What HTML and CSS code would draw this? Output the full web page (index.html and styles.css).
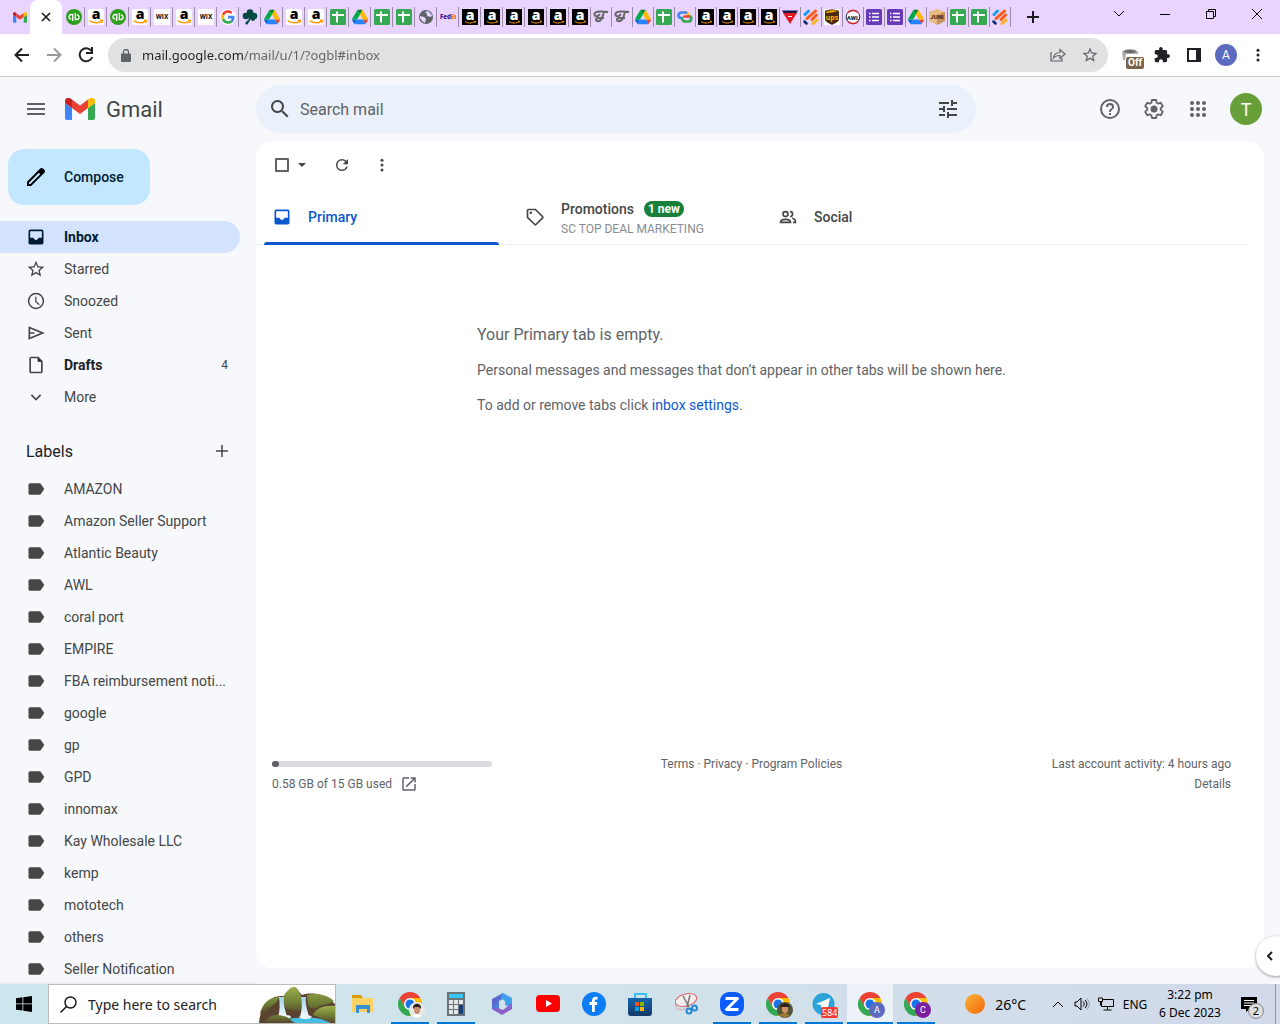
FILE: index.html
```html
<!DOCTYPE html>
<html lang="en">
<head>
    <meta charset="UTF-8">
    <meta name="viewport" content="width=device-width, initial-scale=1.0">
    <title>Inbox - Gmail</title>
    <link rel="stylesheet" href="styles.css">
</head>
<body>
    <!-- Gradients -->
    <svg class="gradients" aria-hidden="true">
        <defs>
            <linearGradient id="sun" x1="0" y1="0" x2="1" y2="1"><stop offset="0" stop-color="#f9b233"/><stop offset="1" stop-color="#f2690d"/></linearGradient>
            <linearGradient id="hill" x1="0" y1="0" x2="0" y2="1"><stop offset="0" stop-color="#9caf4a"/><stop offset=".6" stop-color="#6c7c35"/><stop offset="1" stop-color="#58442c"/></linearGradient>
            <linearGradient id="fall" x1="0" y1="0" x2="0" y2="1"><stop offset="0" stop-color="#9fd3ea"/><stop offset="1" stop-color="#f2fafd"/></linearGradient>
            <linearGradient id="office" x1="0" y1="0" x2="1" y2="1"><stop offset="0" stop-color="#6a4fc4"/><stop offset="1" stop-color="#3aa0ee"/></linearGradient>
            <linearGradient id="store" x1="0" y1="0" x2="0" y2="1"><stop offset="0" stop-color="#1266ad"/><stop offset="1" stop-color="#173a68"/></linearGradient>
        </defs>
    </svg>

    <!-- Shared icons -->
    <svg class="sprite" aria-hidden="true">
        <symbol id="gmail" viewBox="0 0 30 22">
            <path fill="#4285f4" d="M0 5l7 5v12H2a2 2 0 0 1-2-2z"/>
            <path fill="#34a853" d="M30 5l-7 5v12h5a2 2 0 0 0 2-2z"/>
            <path fill="#ea4335" d="M7 1.500l8 6 8-6V10l-8 6-8-6z"/>
            <path fill="#c5221f" d="M0 3C0 0 3-.9 5.400.400L7 1.500V10L0 5z"/>
            <path fill="#fbbc04" d="M30 3c0-3-3-3.900-5.400-2.600L23 1.500V10l7-5z"/>
        </symbol>
        <symbol id="qb" viewBox="0 0 16 16">
            <circle cx="8" cy="8" r="8" fill="#2ca01c"/>
            <path fill="none" stroke="#fff" stroke-width="1.300" d="M6.700 12V5.500H5.300a2.300 2.300 0 0 0 0 4.700M9.300 4v6.500h1.400a2.300 2.300 0 0 0 0-4.700"/>
        </symbol>
        <symbol id="amazon" viewBox="0 0 16 16">
            <rect width="16" height="16" rx="2" fill="#fff"/>
            <text x="8" y="10" text-anchor="middle" font-family="Open Sans, sans-serif" font-weight="800" font-size="14" fill="#000">a</text>
            <path fill="none" stroke="#ff9900" stroke-width="1.500" d="M1.500 11.500c4 3 9 3 12 .600M12 11.300l2.400.200-.600 2.200"/>
        </symbol>
        <symbol id="amazon-dark" viewBox="0 0 16 16">
            <rect width="16" height="16" fill="#000"/>
            <text x="8" y="11" text-anchor="middle" font-family="Open Sans, sans-serif" font-weight="800" font-size="14" fill="#fff">a</text>
            <path fill="none" stroke="#ff9900" stroke-width="1" d="M3 12.500c3 2 7 2 10 0M12 12.200l1.500.100-.500 1.500"/>
        </symbol>
        <symbol id="wix" viewBox="0 0 16 16">
            <rect width="16" height="16" fill="#fff"/>
            <text x="8" y="10" text-anchor="middle" font-family="Roboto, sans-serif" font-weight="700" font-size="7" fill="#111">WIX</text>
        </symbol>
        <symbol id="google" viewBox="-4 -4 56 56">
            <circle cx="24" cy="24" r="28" fill="#fff"/>
            <path fill="#ea4335" d="M24 9.500c3.540 0 6.710 1.220 9.210 3.600l6.850-6.850C35.900 2.380 30.470 0 24 0 14.620 0 6.510 5.380 2.560 13.220l7.980 6.190C12.430 13.720 17.740 9.500 24 9.500z"/>
            <path fill="#4285f4" d="M46.980 24.550c0-1.570-.150-3.090-.380-4.550H24v9.020h12.940c-.580 2.960-2.260 5.480-4.780 7.180l7.730 6c4.510-4.180 7.090-10.360 7.090-17.650z"/>
            <path fill="#fbbc05" d="M10.530 28.590c-.480-1.450-.760-2.990-.760-4.590s.270-3.140.760-4.590l-7.980-6.190C.920 16.460 0 20.120 0 24c0 3.880.920 7.540 2.560 10.780l7.970-6.190z"/>
            <path fill="#34a853" d="M24 48c6.480 0 11.930-2.130 15.890-5.810l-7.730-6c-2.150 1.450-4.920 2.300-8.160 2.300-6.260 0-11.570-4.220-13.470-9.910l-7.980 6.190C6.510 42.620 14.620 48 24 48z"/>
        </symbol>
        <symbol id="clover" viewBox="0 0 16 16">
            <g fill="#044a42"><circle cx="8" cy="3.500" r="3.300"/><circle cx="4" cy="7" r="3.300"/><circle cx="12" cy="7" r="3.300"/><path d="M5 5h6l-2 5-4 6-2-2 4-4z"/><circle cx="11" cy="10" r="2"/></g>
        </symbol>
        <symbol id="drive" viewBox="0 -4 87.300 86">
            <path fill="#0066da" d="M6.600 66.850l3.850 6.650c.8 1.400 1.950 2.500 3.300 3.300L27.500 53H0c0 1.550.4 3.100 1.200 4.500z"/>
            <path fill="#00ac47" d="M43.650 25L29.900 1.200c-1.350.8-2.500 1.900-3.300 3.300L1.200 48.500A9 9 0 0 0 0 53h27.500z"/>
            <path fill="#ea4335" d="M73.550 76.800c1.350-.8 2.500-1.900 3.300-3.300L86.100 57.500c.8-1.400 1.200-2.950 1.200-4.500H59.800l5.850 11.500z"/>
            <path fill="#00832d" d="M43.650 25L57.400 1.200C56.050.4 54.500 0 52.900 0H34.400c-1.600 0-3.150.45-4.500 1.200z"/>
            <path fill="#2684fc" d="M59.800 53H27.500L13.750 76.800c1.350.8 2.900 1.200 4.500 1.200h50.800c1.600 0 3.150-.45 4.500-1.200z"/>
            <path fill="#ffba00" d="M73.400 26.500L60.700 4.500c-.8-1.400-1.950-2.500-3.300-3.300L43.650 25 59.800 53h27.450c0-1.550-.4-3.100-1.200-4.500z"/>
        </symbol>
        <symbol id="sheets" viewBox="0 0 16 16">
            <rect width="16" height="16" rx="1.500" fill="#34a853"/>
            <path stroke="#fff" stroke-width="2" d="M2 6h12M7 2.500v11"/>
        </symbol>
        <symbol id="globe" viewBox="0 0 16 16">
            <circle cx="8" cy="8" r="7" fill="#5f6368"/>
            <path fill="#e9d3ff" d="M2 7l4 1 2 2-1 4-3-2-2-3zM7 3l3-1 4 4-1 2-4-1V5z"/>
        </symbol>
        <symbol id="fedex" viewBox="0 0 16 16">
            <text x="0" y="10" font-family="Open Sans, sans-serif" font-weight="800" font-size="6" fill="#4d148c">Fed<tspan fill="#ff6200">Ex</tspan></text>
        </symbol>
        <symbol id="tee" viewBox="0 0 16 16">
            <path fill="none" stroke="#666" stroke-width="2" d="M15 3C9 2 2 2 1.500 5S5 8 7 5M11 3C9 8 10 11 6 12s-4-3 0-3h5"/>
        </symbol>
        <symbol id="cloud" viewBox="0 0 16 16">
            <g fill="none" stroke-width="2.600" stroke-linecap="round">
                <path stroke="#fbbc04" d="M8 3.500c2 0 3 1 3.500 2.500"/>
                <path stroke="#4285f4" d="M9 3.500H5C.5 3.500.5 9 4 9h1"/>
                <path stroke="#34a853" d="M5 9c0 3 2 3.500 4 3.500h2c4 0 4-4 2-5"/>
                <path stroke="#ea4335" d="M7.500 7.500H12"/>
            </g>
        </symbol>
        <symbol id="triangle" viewBox="0 0 16 16">
            <path fill="#e51b23" d="M1 4h14L8 15z"/>
            <path fill="#1b1b4b" d="M0 1.500h16L14.500 4h-13z"/>
            <path stroke="#fff" d="M6 7.500h4"/>
        </symbol>
        <symbol id="bolt" viewBox="0 0 16 16">
            <g fill="none" stroke-linecap="round" stroke-width="3">
                <path stroke="#199cf4" d="M2 5.500L5.500 2"/><path stroke="#ff5a13" d="M4 9.500l8.500-7.500M9 10.500L13.500 6"/><path stroke="#ffb52b" d="M10 14.500l4-3.500"/><path stroke="#0b2a66" stroke-width="2.500" d="M1.500 12.500l2 2"/>
            </g>
        </symbol>
        <symbol id="ups" viewBox="0 0 16 16">
            <rect width="16" height="16" fill="#fff"/>
            <path fill="#4b2a10" d="M1 2c4-2 10-2 14 0v8c0 3-4 4-7 6-3-2-7-3-7-6z"/>
            <path fill="#e9a400" d="M2 4c5 0 8-1 12-2-3-1-9-1-12 1z"/>
            <text x="8" y="11" text-anchor="middle" font-family="Open Sans, sans-serif" font-weight="700" font-size="7" fill="#ffb500">ups</text>
        </symbol>
        <symbol id="awl" viewBox="0 0 16 16">
            <circle cx="8" cy="8" r="6.800" fill="#fff" stroke="#29324b"/>
            <path fill="none" stroke="#d92231" stroke-width="1.500" d="M3 3.500a7 7 0 0 1 10 0M3 12.500a7 7 0 0 0 10 0"/>
            <text x="8" y="10.500" text-anchor="middle" font-family="Roboto, sans-serif" font-weight="900" font-size="6" fill="#29324b">AWL</text>
        </symbol>
        <symbol id="forms" viewBox="0 0 16 16">
            <rect width="16" height="16" rx="1.500" fill="#673ab7"/>
            <path stroke="#fff" stroke-width="1.600" d="M3 4.500h1.600M6 4.500h7M3 8h1.600M6 8h7M3 11.500h1.600M6 11.500h7"/>
        </symbol>
        <symbol id="juni" viewBox="0 0 16 16">
            <path fill="#e5bb83" d="M8 0l8 3v9l-8 4-8-4V3z"/><path fill="#c6945b" d="M8 6l8-3v9l-8 4z"/>
            <text x="8" y="10" text-anchor="middle" font-family="Roboto, sans-serif" font-weight="900" font-size="6" fill="#3b352f">JUNI</text>
        </symbol>
        <symbol id="chrome" viewBox="0 0 48 48">
            <path fill="#fbbc04" d="M24 24V12h20.800A24 24 0 0 1 24 48z"/>
            <path fill="#34a853" d="M3.200 12l10.400 18L24 36l10.400-6L24 48A24 24 0 0 1 3.200 12z"/>
            <path fill="#ea4335" d="M3.200 12a24 24 0 0 1 41.600 0H24v12l-10.400 6z"/>
            <circle cx="24" cy="24" r="12" fill="#fff"/><circle cx="24" cy="24" r="9" fill="#1a73e8"/>
        </symbol>
        <symbol id="star" viewBox="0 0 24 24"><path d="M22 9.240l-7.190-.620L12 2 9.190 8.630 2 9.240l5.460 4.730L5.820 21 12 17.270 18.180 21l-1.630-7.030L22 9.240zM12 15.400l-3.760 2.270 1-4.280-3.320-2.880 4.380-.380L12 6.100l1.710 4.040 4.380.380-3.320 2.880 1 4.280L12 15.400z"/></symbol>
        <symbol id="inbox" viewBox="0 0 24 24"><path d="M19 3H5a2 2 0 0 0-2 2v14c0 1.100.9 2 2 2h14a2 2 0 0 0 2-2V5a2 2 0 0 0-2-2zm0 10h-4c-.500 1.700-1.500 2.500-3 2.500S9.500 14.700 9 13H5V5h14v8z"/></symbol>
        <symbol id="more" viewBox="0 0 24 24"><circle cx="12" cy="5.500" r="2"/><circle cx="12" cy="12" r="2"/><circle cx="12" cy="18.500" r="2"/></symbol>
        <symbol id="refresh" viewBox="0 0 24 24"><path d="M17.650 6.350A7.960 7.960 0 0 0 12 4a8 8 0 1 0 7.730 10h-2.080A6 6 0 1 1 12 6c1.660 0 3.140.690 4.220 1.780L13 11h7V4l-2.350 2.350z"/></symbol>
        <symbol id="search" viewBox="0 0 24 24"><path d="M15.500 14h-.790l-.280-.270A6.500 6.500 0 1 0 13.730 14.430l.270.280v.790l5 4.990L20.490 19l-4.990-5zm-6 0a4.500 4.500 0 1 1 0-9 4.500 4.500 0 0 1 0 9z"/></symbol>
        <symbol id="label" viewBox="0 0 24 24"><path d="M17.630 5.840C17.270 5.330 16.670 5 16 5L5 5.010C3.900 5.010 3 5.900 3 7v10c0 1.100.9 1.990 2 1.990L16 19c.670 0 1.270-.330 1.630-.840L22 12l-4.370-6.160z"/></symbol>
    </svg>

    <!-- Browser tabs -->
    <div class="tab-strip">
        <button class="pinned-tab" aria-label="Gmail"><svg width="14" height="11"><use href="#gmail"/></svg></button>
        <button class="active-tab" aria-label="Close tab"><svg width="10" height="10" viewBox="0 0 10 10"><path stroke="#1d1b20" stroke-width="1.600" d="M1 1l8 8M9 1L1 9"/></svg></button>
        <div class="tabs">
            <button class="tab"><svg><use href="#qb"/></svg></button>
            <button class="tab"><svg><use href="#amazon"/></svg></button>
            <button class="tab"><svg><use href="#qb"/></svg></button>
            <button class="tab"><svg><use href="#amazon"/></svg></button>
            <button class="tab"><svg><use href="#wix"/></svg></button>
            <button class="tab"><svg><use href="#amazon"/></svg></button>
            <button class="tab"><svg><use href="#wix"/></svg></button>
            <button class="tab"><svg><use href="#google"/></svg></button>
            <button class="tab"><svg><use href="#clover"/></svg></button>
            <button class="tab"><svg><use href="#drive"/></svg></button>
            <button class="tab"><svg><use href="#amazon"/></svg></button>
            <button class="tab"><svg><use href="#amazon"/></svg></button>
            <button class="tab"><svg><use href="#sheets"/></svg></button>
            <button class="tab"><svg><use href="#drive"/></svg></button>
            <button class="tab"><svg><use href="#sheets"/></svg></button>
            <button class="tab"><svg><use href="#sheets"/></svg></button>
            <button class="tab"><svg><use href="#globe"/></svg></button>
            <button class="tab"><svg><use href="#fedex"/></svg></button>
            <button class="tab"><svg><use href="#amazon-dark"/></svg></button>
            <button class="tab"><svg><use href="#amazon-dark"/></svg></button>
            <button class="tab"><svg><use href="#amazon-dark"/></svg></button>
            <button class="tab"><svg><use href="#amazon-dark"/></svg></button>
            <button class="tab"><svg><use href="#amazon-dark"/></svg></button>
            <button class="tab"><svg><use href="#amazon-dark"/></svg></button>
            <button class="tab narrow"><svg><use href="#tee"/></svg></button>
            <button class="tab narrow"><svg><use href="#tee"/></svg></button>
            <button class="tab narrow"><svg><use href="#drive"/></svg></button>
            <button class="tab narrow"><svg><use href="#sheets"/></svg></button>
            <button class="tab narrow"><svg><use href="#cloud"/></svg></button>
            <button class="tab narrow"><svg><use href="#amazon-dark"/></svg></button>
            <button class="tab narrow"><svg><use href="#amazon-dark"/></svg></button>
            <button class="tab narrow"><svg><use href="#amazon-dark"/></svg></button>
            <button class="tab narrow"><svg><use href="#amazon-dark"/></svg></button>
            <button class="tab narrow"><svg><use href="#triangle"/></svg></button>
            <button class="tab narrow"><svg><use href="#bolt"/></svg></button>
            <button class="tab narrow"><svg><use href="#ups"/></svg></button>
            <button class="tab narrow"><svg><use href="#awl"/></svg></button>
            <button class="tab narrow"><svg><use href="#forms"/></svg></button>
            <button class="tab narrow"><svg><use href="#forms"/></svg></button>
            <button class="tab narrow"><svg><use href="#drive"/></svg></button>
            <button class="tab narrow"><svg><use href="#juni"/></svg></button>
            <button class="tab narrow"><svg><use href="#sheets"/></svg></button>
            <button class="tab narrow"><svg><use href="#sheets"/></svg></button>
            <button class="tab narrow"><svg><use href="#bolt"/></svg></button>
        </div>
        <button class="new-tab" aria-label="New tab"><svg width="12" height="12" viewBox="0 0 12 12"><path stroke="#1d1b20" stroke-width="2" d="M6 0v12M0 6h12"/></svg></button>
        <div class="window-controls">
            <button aria-label="Search tabs"><svg width="12" height="12" viewBox="0 0 12 12"><path d="M1 3l5 5 5-5"/></svg></button>
            <button aria-label="Minimize"><svg width="12" height="12" viewBox="0 0 12 12"><path d="M1 6.500h10"/></svg></button>
            <button aria-label="Restore"><svg width="12" height="12" viewBox="0 0 12 12"><path d="M1.500 3.500h7v7h-7zM3.500 3.500v-2h7v7h-2"/></svg></button>
            <button aria-label="Close"><svg width="12" height="12" viewBox="0 0 12 12"><path d="M1 1l10 10M11 1L1 11"/></svg></button>
        </div>
    </div>

    <!-- Address bar -->
    <div class="toolbar">
        <button class="tool" aria-label="Back"><svg width="16" height="16" viewBox="0 0 16 16"><path fill="none" stroke="#202124" stroke-width="2" d="M15 8H2M8 1.500L1.500 8 8 14.500"/></svg></button>
        <button class="tool" aria-label="Forward"><svg width="16" height="16" viewBox="0 0 16 16"><path fill="none" stroke="#9a9b9d" stroke-width="2" d="M1 8h13M8 1.500L14.500 8 8 14.500"/></svg></button>
        <button class="tool" aria-label="Reload"><svg width="16" height="16" viewBox="0 0 16 16"><path fill="none" stroke="#202124" stroke-width="2" d="M13.500 4A6.500 6.500 0 1 0 14.300 10M14 0v6H8"/></svg></button>
        <div class="omnibox">
            <svg width="10" height="13" viewBox="0 0 10 13"><path fill="#5f6368" d="M1 4.500h8a1 1 0 0 1 1 1V12a1 1 0 0 1-1 1H1a1 1 0 0 1-1-1V5.500a1 1 0 0 1 1-1z"/><path fill="none" stroke="#5f6368" stroke-width="1.300" d="M2.500 5V3a2.500 2.500 0 0 1 5 0v2"/></svg>
            <input class="url" type="text" aria-label="Address" value="mail.google.com/mail/u/1/?ogbl#inbox">
            <button class="tool" aria-label="Share"><svg width="16" height="14" viewBox="0 0 16 14"><path fill="none" stroke="#5f6368" stroke-width="1.200" d="M1 4v9h11v-3M3.500 10c.5-4 3-5.500 6.500-5.500V1.500L15 6l-5 4.500v-3c-3 0-5 .500-6.500 2.500z"/></svg></button>
            <button class="tool" aria-label="Bookmark"><svg width="18" height="18" fill="#5f6368"><use href="#star"/></svg></button>
        </div>
        <button class="tool extension" aria-label="Extension">
            <svg width="16" height="12" viewBox="0 0 16 12"><path fill="#aaa" d="M0 3c2-4 14-4 16 0v2H4l-1 6H1z"/><ellipse cx="8" cy="2.500" rx="6" ry="1.500" fill="#666"/></svg>
            <span class="off">Off</span>
        </button>
        <button class="tool" aria-label="Extensions"><svg class="dark" width="16" height="16" viewBox="1 1 22 22"><path d="M20.500 11H19V7c0-1.100-.9-2-2-2h-4V3.500a2.500 2.500 0 0 0-5 0V5H4c-1.100 0-1.990.9-1.990 2v3.800H3.500a2.700 2.700 0 0 1 0 5.400H2V20c0 1.100.9 2 2 2h3.800v-1.500a2.700 2.700 0 0 1 5.400 0V22H17c1.100 0 2-.9 2-2v-4h1.500a2.500 2.500 0 0 0 0-5z"/></svg></button>
        <button class="tool" aria-label="Side panel"><svg width="14" height="14" viewBox="0 0 14 14"><path fill="#202124" d="M0 0h14v14H0zM2 2v10h7V2z" fill-rule="evenodd"/></svg></button>
        <button class="tool" aria-label="Profile"><span class="profile">A</span></button>
        <button class="tool" aria-label="Menu"><svg class="dark" width="18" height="18"><use href="#more"/></svg></button>
    </div>

    <div class="gmail">
        <header class="header">
            <div class="brand">
                <button class="icon-button" aria-label="Main menu"><svg width="18" height="12" viewBox="0 0 18 12"><path stroke="#5f6368" stroke-width="2" d="M0 1h18M0 6h18M0 11h18"/></svg></button>
                <a class="logo" href="#"><svg width="30" height="22"><use href="#gmail"/></svg><span>Gmail</span></a>
            </div>
            <form class="search">
                <button class="icon-button" type="button" aria-label="Search"><svg width="24" height="24"><use href="#search"/></svg></button>
                <input type="search" placeholder="Search mail" aria-label="Search mail">
                <button class="icon-button" type="button" aria-label="Search options"><svg width="24" height="24" viewBox="0 0 24 24"><path d="M3 17v2h6v-2H3zM3 5v2h10V5H3zm10 16v-2h8v-2h-8v-2h-2v6h2zM7 9v2H3v2h4v2h2V9H7zm14 4v-2H11v2h10zm-6-4h2V7h4V5h-4V3h-2v6z"/></svg></button>
            </form>
            <div class="header-actions">
                <button class="icon-button" aria-label="Support"><svg width="24" height="24" viewBox="0 0 24 24"><path d="M11 18h2v-2h-2v2zm1-16a10 10 0 1 0 0 20 10 10 0 0 0 0-20zm0 18a8 8 0 1 1 0-16 8 8 0 0 1 0 16zm0-14a4 4 0 0 0-4 4h2a2 2 0 1 1 4 0c0 2-3 1.750-3 5h2c0-2.250 3-2.500 3-5a4 4 0 0 0-4-4z"/></svg></button>
                <button class="icon-button" aria-label="Settings"><svg width="24" height="24" viewBox="0 0 24 24"><path fill="none" stroke="#5f6368" stroke-width="2" transform="translate(1.200 1.200) scale(.9)" d="M19.430 12.980c.040-.320.070-.640.070-.980 0-.340-.030-.660-.070-.980l2.110-1.650c.190-.150.240-.420.120-.640l-2-3.460c-.090-.160-.260-.250-.440-.250-.060 0-.120.010-.170.030l-2.490 1c-.520-.400-1.080-.730-1.690-.980l-.380-2.650C14.460 2.180 14.250 2 14 2h-4c-.250 0-.460.180-.490.420l-.380 2.650c-.610.250-1.170.590-1.690.980l-2.490-1c-.060-.020-.120-.030-.180-.030-.170 0-.340.090-.430.250l-2 3.460c-.130.220-.070.490.120.640l2.110 1.650c-.040.320-.070.650-.070.980 0 .330.030.660.070.980l-2.110 1.650c-.190.150-.240.420-.120.640l2 3.460c.090.160.260.250.440.250.060 0 .120-.010.170-.030l2.490-1c.520.400 1.080.730 1.690.980l.380 2.650c.030.240.240.420.490.420h4c.250 0 .460-.180.490-.420l.380-2.650c.610-.250 1.170-.590 1.690-.980l2.490 1c.060.020.120.030.180.030.170 0 .340-.090.430-.250l2-3.460c.120-.220.070-.490-.120-.640z"/><circle cx="12" cy="12" r="3.500"/></svg></button>
                <button class="icon-button" aria-label="Google apps"><svg width="24" height="24" viewBox="0 0 24 24"><g><circle cx="6" cy="6" r="2"/><circle cx="12" cy="6" r="2"/><circle cx="18" cy="6" r="2"/><circle cx="6" cy="12" r="2"/><circle cx="12" cy="12" r="2"/><circle cx="18" cy="12" r="2"/><circle cx="6" cy="18" r="2"/><circle cx="12" cy="18" r="2"/><circle cx="18" cy="18" r="2"/></g></svg></button>
                <button class="avatar" aria-label="Google Account">T</button>
            </div>
        </header>

        <div class="columns">
            <nav class="sidebar">
                <button class="compose"><svg width="24" height="24" viewBox="0 0 24 24"><path d="M20.410 4.940l-1.350-1.350c-.780-.780-2.050-.780-2.830 0L3 16.820V21h4.180L20.410 7.770c.79-.78.79-2.050 0-2.830zM6.410 19.060L5 19v-1.360l9.820-9.820 1.410 1.410z" fill="#000"/></svg>Compose</button>
                <ul class="nav-list">
                    <li><a class="nav-item selected" href="#"><svg><use href="#inbox"/></svg>Inbox</a></li>
                    <li><a class="nav-item" href="#"><svg><use href="#star"/></svg>Starred</a></li>
                    <li><a class="nav-item" href="#"><svg viewBox="0 0 24 24"><path d="M12 2.200a9.800 9.800 0 1 0 0 19.600 9.800 9.800 0 0 0 0-19.600zM12 20a8 8 0 1 1 0-16 8 8 0 0 1 0 16zm.500-13H11v6l4.500 4 1-1.200-4-3.400z"/></svg>Snoozed</a></li>
                    <li><a class="nav-item" href="#"><svg viewBox="0 0 24 24"><path fill="none" stroke="#444746" stroke-width="2" d="M4 5.500L20 12 4 18.500zM4 12h6"/></svg>Sent</a></li>
                    <li><a class="nav-item unread" href="#"><svg viewBox="0 0 24 24"><path fill="none" stroke="#444746" stroke-width="2" d="M6 3h8.500L19 7.500V20a1 1 0 0 1-1 1H6a1 1 0 0 1-1-1V4a1 1 0 0 1 1-1z"/><path d="M14 3v5h5z"/></svg>Drafts<span class="badge">4</span></a></li>
                    <li><a class="nav-item" href="#"><svg viewBox="0 0 24 24"><path fill="none" stroke="#444746" stroke-width="2" d="M6.500 9.500L12 15l5.500-5.500"/></svg>More</a></li>
                </ul>
                <div class="labels-heading">
                    <h2>Labels</h2>
                    <button class="add-label" aria-label="Create new label"><svg width="12" height="12" viewBox="0 0 12 12"><path stroke="#444746" stroke-width="1.500" d="M6 0v12M0 6h12"/></svg></button>
                </div>
                <ul class="nav-list">
                    <li><a class="nav-item" href="#"><svg><use href="#label"/></svg>AMAZON</a></li>
                    <li><a class="nav-item" href="#"><svg><use href="#label"/></svg>Amazon Seller Support</a></li>
                    <li><a class="nav-item" href="#"><svg><use href="#label"/></svg>Atlantic Beauty</a></li>
                    <li><a class="nav-item" href="#"><svg><use href="#label"/></svg>AWL</a></li>
                    <li><a class="nav-item" href="#"><svg><use href="#label"/></svg>coral port</a></li>
                    <li><a class="nav-item" href="#"><svg><use href="#label"/></svg>EMPIRE</a></li>
                    <li><a class="nav-item" href="#"><svg><use href="#label"/></svg>FBA reimbursement noti...</a></li>
                    <li><a class="nav-item" href="#"><svg><use href="#label"/></svg>google</a></li>
                    <li><a class="nav-item" href="#"><svg><use href="#label"/></svg>gp</a></li>
                    <li><a class="nav-item" href="#"><svg><use href="#label"/></svg>GPD</a></li>
                    <li><a class="nav-item" href="#"><svg><use href="#label"/></svg>innomax</a></li>
                    <li><a class="nav-item" href="#"><svg><use href="#label"/></svg>Kay Wholesale LLC</a></li>
                    <li><a class="nav-item" href="#"><svg><use href="#label"/></svg>kemp</a></li>
                    <li><a class="nav-item" href="#"><svg><use href="#label"/></svg>mototech</a></li>
                    <li><a class="nav-item" href="#"><svg><use href="#label"/></svg>others</a></li>
                    <li><a class="nav-item" href="#"><svg><use href="#label"/></svg>Seller Notification</a></li>
                </ul>
            </nav>

            <main class="mail">
                <div class="mail-toolbar">
                    <input class="select-all" type="checkbox" aria-label="Select all">
                    <button class="select-menu" aria-label="Select"><svg width="8" height="4" viewBox="0 0 8 4"><path d="M0 0h8L4 4z"/></svg></button>
                    <button class="icon-button" aria-label="Refresh"><svg width="18" height="18"><use href="#refresh"/></svg></button>
                    <button class="icon-button" aria-label="More options"><svg width="18" height="18"><use href="#more"/></svg></button>
                </div>
                <div class="categories">
                    <button class="category current"><svg><use href="#inbox"/></svg>Primary</button>
                    <button class="category">
                        <svg viewBox="0 0 24 24"><path fill="none" stroke="#444746" stroke-width="2" d="M3 4a1 1 0 0 1 1-1h8.500l8.700 8.700a1 1 0 0 1 0 1.300l-8 8a1 1 0 0 1-1.400 0L3 12.500z"/><circle cx="7" cy="7" r="1.500"/></svg>
                        <span class="category-text">
                            <span class="category-title">Promotions <span class="new">1 new</span></span>
                            <span class="sender">SC TOP DEAL MARKETING</span>
                        </span>
                    </button>
                    <button class="category"><svg viewBox="0 0 24 24"><g fill="none" stroke="#444746" stroke-width="2"><circle cx="9" cy="8.500" r="3"/><path d="M3 18.500c0-5 12-5 12 0zM14.500 5.500c4 0 4 6 0 6M17 13.500c3 .500 4 2 4 5h-3"/></g></svg>Social</button>
                </div>
                <section class="empty">
                    <div class="empty-text">
                        <p class="empty-title">Your Primary tab is empty.</p>
                        <p>Personal messages and messages that don’t appear in other tabs will be shown here.</p>
                        <p>To add or remove tabs click <a href="#">inbox settings</a>.</p>
                    </div>
                </section>
                <footer class="footer">
                    <div>
                        <div class="storage"><div class="storage-used" style="width: 3%"></div></div>
                        <a class="storage-link" href="#">0.58 GB of 15 GB used <svg width="18" height="18" viewBox="0 0 24 24"><path d="M19 19H5V5h7V3H5a2 2 0 0 0-2 2v14a2 2 0 0 0 2 2h14c1.100 0 2-.9 2-2v-7h-2v7zM14 3v2h3.590l-9.830 9.830 1.410 1.410L19 6.410V10h2V3h-7z"/></svg></a>
                    </div>
                    <div><a href="#">Terms</a> · <a href="#">Privacy</a> · <a href="#">Program Policies</a></div>
                    <div class="activity">Last account activity: 4 hours ago<br><a href="#">Details</a></div>
                </footer>
            </main>
        </div>
        <button class="side-toggle" aria-label="Show side panel"><svg width="6" height="10" viewBox="0 0 6 10"><path fill="none" stroke="#202124" stroke-width="2" d="M5 1L1 5l4 4"/></svg></button>
    </div>

    <!-- Windows taskbar -->
    <div class="taskbar">
        <button class="start" aria-label="Start"><svg width="16" height="16" viewBox="0 0 16 16"><path d="M0 2.200L6.500 1.300v6.200H0zM7.300 1.200L16 0v7.500H7.300zM0 8.300h6.500v6.300L0 13.700zM7.300 8.300H16V16l-8.700-1.200z"/></svg></button>
        <div class="task-search">
            <svg width="17" height="17" viewBox="0 0 17 17"><g fill="none" stroke="#111" stroke-width="1.400"><circle cx="10.500" cy="6.500" r="5.500"/><path d="M6.500 10.500L.5 16.500"/></g></svg>
            <input type="text" placeholder="Type here to search" aria-label="Type here to search">
            <svg class="landscape" width="76" height="37" viewBox="0 0 76 37">
                <path fill="#5c4330" d="M0 37c1-12 6-20 12-24 4-3 9-3 13-3 4-5 7-8 10-9 4 1 5 6 8 8 9-3 20-1 26 3l7 6v19z"/>
                <path fill="url(#hill)" d="M1 28C3 18 10 11 20 11c-2 8-9 8-11 13S4 26 1 28zM24 11c3-5 7-10 11-10 4 1 5 6 7 9v13c-6 3-13 1-16-2zM48 9c9-2 19-1 27 6-6 5-10 2-15 6-5 3-10 1-11-2z"/>
                <path fill="url(#fall)" d="M20 11h5c-1 8 2 15 3 20h-9c2-6 2-13 1-20zM42 11h5c-1 8 2 15 3 20h-9c2-6 2-13 1-20z"/>
                <path fill="#45bde4" d="M26 34c10-3 24-3 36-1l10 4H24z"/>
                <path fill="#e8f4f7" d="M20 31c5-3 12-2 12 0s-8 3-12 0zM40 31c4-3 12-2 13 0-4 3-10 3-13 0z"/>
                <path fill="url(#hill)" d="M6 37c3-8 12-9 18-7 6 1 7 4 12 7zM54 29c3-7 12-10 22-9v17c-7-1-13-5-22-8z"/>
            </svg>
        </div>
        <div class="apps">
            <button class="app" aria-label="File Explorer"><svg viewBox="2 0 24 24"><path fill="#d79b0c" d="M2 3h9l2 3v3H2z"/><path fill="#fdd264" d="M2 6h21v14H2z"/><path fill="#398fd4" d="M6 13h14v8h-3v-4H9v4H6z"/></svg></button>
            <button class="app running" aria-label="Chrome">
                <svg><use href="#chrome"/></svg>
                <svg class="mini" viewBox="0 0 16 16"><circle cx="8" cy="8" r="8" fill="#e7e9e9"/><path fill="#c98f70" d="M5 4h6v6l-3 3-3-3z"/><path fill="#2b2321" d="M4 7c-1-7 9-7 8 0l-2-2H6z"/><path fill="#fff" d="M3 14l4-2h2l4 2-5 2z"/></svg>
            </button>
            <button class="app running" aria-label="Calculator"><svg viewBox="0 0 24 24"><path fill="#6c747b" d="M3 0h18v24H3z"/><path fill="#37c5f1" d="M5 2h14v4H5z"/><path fill="#e2e6e9" d="M5 8h4v4H5zM10 8h4v4h-4zM15 8h4v4h-4zM5 13h4v4H5zM10 13h4v4h-4zM5 18h4v4H5zM10 18h4v4h-4z"/><path fill="#11407a" d="M15 13h4v9h-4z"/></svg></button>
            <button class="app" aria-label="Microsoft 365"><svg viewBox="0 0 24 24"><path fill="url(#office)" d="M13 1L2 7v10l5 3 2-1V9l6-3z"/><path fill="#3fa2ec" d="M13 1l9 5v10l-7-3V9l-4-3z"/><path fill="#8b60c9" d="M2 17l6-1 5 2 9-7v6l-10 6z"/></svg></button>
            <button class="app" aria-label="YouTube"><svg viewBox="0 0 24 24"><rect y="3" width="24" height="17" rx="4" fill="#f00"/><path fill="#fff" d="M10 8l6 3.500-6 3.500z"/></svg></button>
            <button class="app" aria-label="Facebook"><svg viewBox="0 0 24 24"><circle cx="12" cy="12" r="12" fill="#0a7cf6"/><path fill="#fff" d="M10 20v-7H7.500v-3H10V8.500c0-3 2-4.200 5.500-3.700v2.800c-2-.200-2.700.100-2.700 1.400v1h2.600l-.5 3h-2.100v7z"/></svg></button>
            <button class="app" aria-label="Microsoft Store"><svg viewBox="0 0 24 24"><path fill="none" stroke="#36bdf2" stroke-width="2" d="M7 7V2h11v5"/><path fill="url(#store)" d="M0 6h24v15a3 3 0 0 1-3 3H3a3 3 0 0 1-3-3z"/><path fill="#f25022" d="M7 10h4v4H7z"/><path fill="#7fba00" d="M12 10h4v4h-4z"/><path fill="#00a4ef" d="M7 15h4v4H7z"/><path fill="#ffb900" d="M12 15h4v4h-4z"/></svg></button>
            <button class="app" aria-label="Snipping Tool"><svg viewBox="0 0 24 24"><ellipse cx="12" cy="8" rx="11" ry="6" transform="rotate(-15 12 8)" fill="#f4eeee" stroke="#dc6468"/><path fill="none" stroke="#dfa4a8" d="M2 11c-2 8 7 9 13 3"/><path stroke="#777" stroke-width="1.500" d="M9 4l6 11M16 3l-3 12"/><g fill="none" stroke="#238bd1" stroke-width="2"><circle cx="15" cy="19" r="2.500"/><circle cx="20.500" cy="16" r="2.500"/></g></svg></button>
            <button class="app running" aria-label="Zoom"><svg viewBox="0 0 24 24"><rect width="24" height="24" rx="9" fill="#0b5cff"/><path fill="none" stroke="#fff" stroke-width="3" stroke-linejoin="round" d="M5.500 6.500h12l-11 11h12"/></svg></button>
            <button class="app running" aria-label="Chrome">
                <svg><use href="#chrome"/></svg>
                <svg class="mini" viewBox="0 0 16 16"><circle cx="8" cy="8" r="8" fill="#53543a"/><path fill="#d49166" d="M5 4h6v5l-3 3-3-3z"/><path fill="#2a241b" d="M3 5c1-5 9-5 10 0z"/><path fill="#a17a31" d="M2 13l5-2 6 2-5 3z"/></svg>
            </button>
            <button class="app running" aria-label="Telegram">
                <svg viewBox="0 0 24 24"><circle cx="11.500" cy="12" r="11" fill="#2ba3d9"/><path fill="#fff" d="M4 12l14-6-2.500 12-4-3-2 2-.500-4z"/></svg>
                <span class="count">584</span>
            </button>
            <button class="app running focused" aria-label="Chrome"><svg><use href="#chrome"/></svg><span class="mini letter">A</span></button>
            <button class="app running" aria-label="Chrome"><svg><use href="#chrome"/></svg><span class="mini letter purple">C</span></button>
        </div>
        <div class="tray">
            <button class="weather"><svg width="20" height="20" viewBox="0 0 20 20"><circle cx="10" cy="10" r="10" fill="url(#sun)"/></svg>26°C</button>
            <button aria-label="Show hidden icons"><svg width="12" height="8" viewBox="0 0 12 8"><path d="M1 7l5-5 5 5"/></svg></button>
            <button aria-label="Volume"><svg width="16" height="14" viewBox="0 0 16 14"><path d="M1 5h2l4-4v12L3 9H1zM9 4.500c1.500 1.500 1.500 3.500 0 5M11 3c2.500 2.500 2.500 5.500 0 8"/><path stroke="#999" d="M13 1.500c3 3.500 3 7.500 0 11"/></svg></button>
            <button aria-label="Network"><svg width="16" height="14" viewBox="0 0 16 14"><path d="M5 2.500h10.500v7H3.500V5M.5 1h4v3.500h-4zM2.500 4.500v4M9.500 9.500v3M5.500 13h8"/></svg></button>
            <button class="language">ENG</button>
            <button class="clock">3:22 pm<br>6 Dec 2023</button>
            <button class="notifications" aria-label="Notifications"><svg width="16" height="15" viewBox="0 0 16 15"><path fill="#000" stroke="none" d="M0 0h16v12h-7l-4 3v-3H0z"/><path stroke="#fff" d="M3 3.500h10M3 6h10M3 8.500h7"/></svg><span>2</span></button>
        </div>
    </div>
</body>
</html>
```

FILE: styles.css
```css
* {
    box-sizing: border-box;
}
body {
    margin: 0;
    height: 100vh;
    display: flex;
    flex-direction: column;
    overflow: hidden;
    font-family: Roboto, Arial, sans-serif;
    font-size: 14px;
    color: #444746;
    background-color: #f6f8fc;
}
button, input {
    font: inherit;
    color: inherit;
    border: none;
    background: none;
    padding: 0;
    margin: 0;
}
button {
    display: flex;
    align-items: center;
    justify-content: center;
    cursor: pointer;
}
input {
    min-width: 0;
    outline: none;
}
a {
    color: inherit;
    text-decoration: none;
}
ul {
    list-style: none;
    margin: 0;
    padding: 0;
}
svg {
    flex-shrink: 0;
    fill: currentColor;
}
.gradients {
    position: absolute;
    width: 0;
    height: 0;
}
.sprite {
    display: none;
}

/* Browser tabs */
.tab-strip {
    display: flex;
    flex-shrink: 0;
    height: 34px;
    background-color: #e9d3ff;
}
.pinned-tab {
    width: 30px;
    padding-left: 10px;
}
.active-tab {
    width: 32px;
    background-color: #fff;
    border-radius: 8px 8px 0 0;
}
.tabs {
    display: flex;
    align-items: center;
    padding-left: 1px;
}
.tab {
    width: 22px;
    height: 20px;
    border-right: 1px solid #9c8da9;
}
.tab.narrow {
    width: 21px;
}
.tab svg {
    width: 16px;
    height: 16px;
}
.new-tab {
    width: 44px;
}
.window-controls {
    display: flex;
    margin-left: auto;
    height: 28px;
}
.window-controls button {
    width: 46px;
}
.window-controls svg {
    fill: none;
    stroke: #000;
}

/* Address bar */
.toolbar {
    display: flex;
    align-items: center;
    flex-shrink: 0;
    height: 43px;
    padding: 0 6px;
    background-color: #fff;
    border-bottom: 1px solid #c9cccd;
}
.tool {
    width: 32px;
    height: 32px;
    color: #5f6368;
}
.tool .dark {
    color: #202124;
}
.omnibox {
    display: flex;
    align-items: center;
    flex: 1;
    height: 34px;
    margin: 0 6px;
    padding: 0 2px 0 13px;
    border-radius: 17px;
    background-color: #e1e1e1;
}
.url {
    flex: 1;
    margin-left: 11px;
    font-family: "Noto Sans", "Open Sans", sans-serif;
    font-size: 13px;
    /* host is darker than the path */
    color: transparent;
    background: linear-gradient(to right, #202124 102px, #5f6368 102px);
    background-clip: text;
    -webkit-background-clip: text;
}
.extension {
    position: relative;
}
.off {
    position: absolute;
    top: 18px;
    left: 12px;
    padding: 0 2px;
    border-radius: 2px;
    font-size: 10px;
    font-weight: 700;
    line-height: 12px;
    color: #fff;
    background-color: #7b6548;
}
.profile {
    width: 22px;
    height: 22px;
    border-radius: 50%;
    font-size: 12px;
    line-height: 22px;
    color: #fff;
    background-color: #5c6bc0;
}

/* Gmail */
.gmail {
    position: relative;
    display: flex;
    flex-direction: column;
    flex: 1;
    min-height: 0;
    overflow: hidden;
}
.header {
    display: flex;
    align-items: center;
    flex-shrink: 0;
    height: 64px;
    padding-right: 18px;
    color: #5f6368;
}
.brand {
    display: flex;
    align-items: center;
    width: 256px;
    padding-left: 16px;
}
.icon-button {
    width: 40px;
    height: 40px;
}
.logo {
    display: flex;
    align-items: center;
    gap: 11px;
    margin-left: 9px;
    font-size: 22px;
    color: #444746;
}
.search {
    display: flex;
    align-items: center;
    flex: 0 1 720px;
    height: 48px;
    padding: 0 8px 0 4px;
    border-radius: 24px;
    color: #444746;
    background-color: #eaf1fb;
}
.search input {
    flex: 1;
    font-size: 16px;
}
.search input::placeholder {
    color: #5f6368;
}
.header-actions {
    display: flex;
    align-items: center;
    gap: 4px;
    margin-left: auto;
}
.avatar {
    width: 32px;
    height: 32px;
    margin-left: 8px;
    border-radius: 50%;
    font-size: 18px;
    color: #fff;
    background-color: #689f38;
}
.columns {
    display: flex;
    flex: 1;
    min-height: 0;
}

/* Sidebar */
.sidebar {
    width: 256px;
    flex-shrink: 0;
    padding-top: 8px;
    overflow: hidden;
    border-bottom: 2px solid #ebecef;
}
.compose {
    height: 56px;
    margin: 0 0 16px 8px;
    padding: 0 26px 0 16px;
    gap: 16px;
    border-radius: 16px;
    font-weight: 500;
    color: #001d35;
    background-color: #c2e7ff;
}
.nav-item {
    display: flex;
    align-items: center;
    height: 32px;
    margin-right: 16px;
    padding: 0 12px 0 26px;
    border-radius: 0 16px 16px 0;
    white-space: nowrap;
}
.nav-item svg {
    width: 20px;
    height: 20px;
    margin-right: 18px;
}
.nav-item.selected {
    font-weight: 700;
    color: #001d35;
    background-color: #d3e3fd;
}
.nav-item.unread {
    font-weight: 700;
    color: #202124;
}
.badge {
    margin-left: auto;
    font-size: 12px;
    font-weight: 400;
    color: #444746;
}
.labels-heading {
    display: flex;
    align-items: center;
    justify-content: space-between;
    height: 60px;
    padding: 16px 24px 0 26px;
}
.labels-heading h2 {
    margin: 0;
    font-size: 16px;
    font-weight: 400;
    color: #202124;
}
.add-label {
    width: 20px;
    height: 20px;
}

/* Mail list */
.mail {
    flex: 1;
    margin: 0 16px 16px 0;
    border-radius: 16px;
    background-color: #fff;
}
.mail-toolbar {
    display: flex;
    align-items: center;
    height: 48px;
    padding-left: 19px;
}
.select-all {
    appearance: none;
    width: 14px;
    height: 14px;
    border: 2px solid #5f6368;
    border-radius: 1px;
}
.select-menu {
    width: 26px;
    height: 20px;
    margin-right: 7px;
}
.categories {
    display: flex;
    height: 56px;
    margin-right: 16px;
    padding-left: 8px;
    border-bottom: 1px solid #eceff1;
}
.category {
    position: relative;
    flex: 0 1 253px;
    justify-content: flex-start;
    padding-left: 8px;
    font-weight: 500;
    text-align: left;
}
.category svg {
    width: 20px;
    height: 20px;
    margin-right: 16px;
}
.category.current {
    color: #0b57d0;
}
.category.current::after {
    content: "";
    position: absolute;
    left: 0;
    right: 18px;
    bottom: -1px;
    height: 3px;
    border-radius: 3px 3px 0 0;
    background-color: #0b57d0;
}
.category-text {
    display: flex;
    flex-direction: column;
    gap: 4px;
    padding-top: 4px;
}
.category-title {
    display: flex;
    align-items: center;
    gap: 10px;
}
.new {
    padding: 0 4px;
    border-radius: 8px;
    font-size: 12px;
    font-weight: 700;
    line-height: 16px;
    color: #fff;
    background-color: #188038;
}
.sender {
    font-size: 12px;
    font-weight: 400;
    line-height: 16px;
    color: #8a8d90;
}
.empty {
    display: flex;
    justify-content: center;
    min-height: 509px;
    padding: 80px 26px 0 0;
    color: #5f6368;
}
.empty-text {
    width: 540px;
}
.empty p {
    margin: 0 0 15px;
    line-height: 20px;
}
.empty .empty-title {
    font-size: 16px;
}
.empty a {
    color: #0b57d0;
}
.footer {
    display: grid;
    grid-template-columns: 1fr auto 1fr;
    padding: 0 33px 0 16px;
    font-size: 12px;
    line-height: 20px;
    color: #5f6368;
}
.storage {
    width: 220px;
    height: 6px;
    margin: 7px 0;
    border-radius: 3px;
    background-color: #dadce0;
}
.storage-used {
    min-width: 6px;
    height: 6px;
    border-radius: 3px;
    background-color: #5f6368;
}
.storage-link {
    display: flex;
    align-items: center;
    gap: 8px;
}
.activity {
    text-align: right;
}
.side-toggle {
    position: absolute;
    right: -16px;
    bottom: 8px;
    width: 40px;
    height: 40px;
    padding-right: 12px;
    border-radius: 50%;
    background-color: #fff;
    box-shadow: 0 1px 3px rgba(60, 64, 67, 0.5);
}

/* Taskbar */
.taskbar {
    display: flex;
    flex-shrink: 0;
    height: 40px;
    font-family: "Noto Sans", "Open Sans", sans-serif;
    font-size: 12px;
    color: #000;
    background: linear-gradient(to right, #cde6ee, #d2e2ea 50%, #d1d9ea);
}
.start {
    width: 48px;
}
.task-search {
    display: flex;
    align-items: center;
    width: 288px;
    padding-left: 11px;
    border: 1px solid #bbb;
    background-color: #fff;
}
.task-search input {
    flex: 1;
    margin-left: 11px;
    font-size: 14px;
}
.task-search input::placeholder {
    color: #222;
}
.landscape {
    align-self: flex-end;
}
.apps {
    display: flex;
    margin-left: 5px;
}
.app {
    position: relative;
    width: 46px;
}
.app svg {
    width: 24px;
    height: 24px;
}
.app.running::after {
    content: "";
    position: absolute;
    left: 4px;
    right: 4px;
    bottom: 0;
    height: 2px;
    background-color: #0078d7;
}
.app.focused {
    background-color: #edf2f8;
}
.app.focused::after {
    left: 0;
    right: 0;
}
.app .mini {
    position: absolute;
    left: 22px;
    top: 18px;
    width: 16px;
    height: 16px;
}
.letter {
    border-radius: 50%;
    font-family: Roboto, sans-serif;
    font-size: 9px;
    line-height: 16px;
    color: #fff;
    background-color: #5c6bc0;
}
.letter.purple {
    background-color: #7b1fa2;
}
.count {
    position: absolute;
    left: 20px;
    top: 23px;
    padding: 0 1px;
    border-radius: 2px;
    font-size: 9px;
    line-height: 11px;
    color: #fff;
    background-color: #f23c34;
}
.tray {
    display: flex;
    margin-left: auto;
    padding-right: 4px;
}
.tray button {
    width: 24px;
}
.tray svg {
    fill: none;
    stroke: #000;
}
.tray .weather {
    width: auto;
    gap: 10px;
    margin-right: 20px;
    font-size: 14px;
}
.tray .weather svg {
    stroke: none;
}
.tray .language {
    width: 34px;
}
.tray .clock {
    width: 76px;
    line-height: 18px;
}
.tray .notifications {
    position: relative;
    width: 48px;
    padding-right: 6px;
    border-right: 1px solid #8b98a5;
}
.notifications span {
    position: absolute;
    left: 20px;
    top: 19px;
    width: 16px;
    height: 16px;
    border: 1px solid #888;
    border-radius: 50%;
    font-size: 11px;
    line-height: 14px;
    background-color: #ddd;
}
```
